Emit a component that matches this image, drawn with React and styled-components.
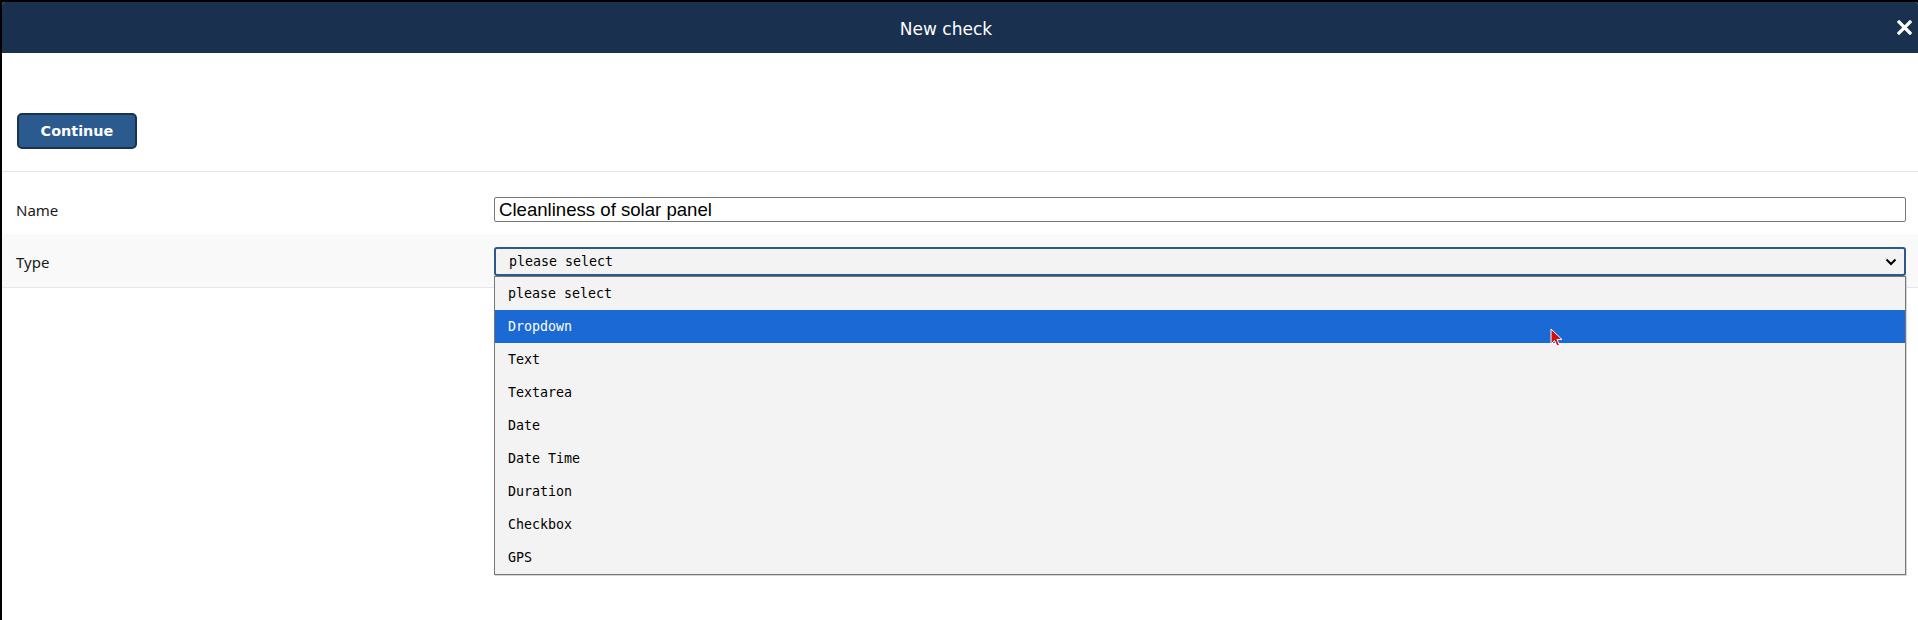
import React, { useState } from "react";
import styled, { createGlobalStyle } from "styled-components";

const GlobalStyle = createGlobalStyle`
  html, body {
    margin: 0;
    padding: 0;
    background: #000;
    height: 100%;
    overflow: hidden;
  }
  #root {
    height: 100%;
  }
`;

const Dialog = styled.div`
  margin: 2px 0 0 2px;
  height: calc(100% - 2px);
  background: #fff;
  border-radius: 3px 3px 0 0;
  display: flex;
  flex-direction: column;
  position: relative;
`;

const Header = styled.header`
  height: 51px;
  background: #19314e;
  border-radius: 3px 3px 0 0;
  display: flex;
  align-items: center;
  color: #fff;
`;

const Title = styled.h1`
  flex: 1;
  margin: 0;
  padding-top: 3px;
  text-align: center;
  font-family: "DejaVu Sans", Verdana, sans-serif;
  font-weight: normal;
  font-size: 17px;
`;

const CloseButton = styled.button`
  width: 28px;
  height: 51px;
  padding: 0;
  border: none;
  background: transparent;
  display: flex;
  align-items: center;
  justify-content: center;
  cursor: pointer;
`;

const Toolbar = styled.div`
  padding: 60px 15px 22px;
  border-bottom: 1px solid #e6e6e6;
`;

const PrimaryButton = styled.button`
  width: 120px;
  height: 36px;
  background: #2a5a8e;
  border: 2px solid #1a3252;
  border-radius: 5px;
  color: #fff;
  font-family: "DejaVu Sans", Verdana, sans-serif;
  font-weight: bold;
  font-size: 14.4px;
  cursor: pointer;
`;

const Form = styled.div`
  margin-top: 25px;
  display: flex;
  flex-direction: column;
`;

const Row = styled.div`
  display: grid;
  grid-template-columns: 478px 1fr;
  align-items: center;
  padding: ${(p) => (p.$shaded ? "13px 12px 11px 14px" : "0 12px 12px 14px")};
  background: ${(p) => (p.$shaded ? "#f9f9f9" : "#fff")};
  border-bottom: ${(p) => (p.$shaded ? "1px solid #e6e6e6" : "none")};
`;

const Label = styled.label`
  font-family: "Noto Sans", sans-serif;
  font-size: 15px;
  color: #1a1a1a;
`;

const TextInput = styled.input`
  box-sizing: border-box;
  width: 100%;
  height: 25px;
  border: 1px solid #767676;
  border-radius: 2px;
  padding: 0 4px;
  font-family: "Liberation Sans", Arial, sans-serif;
  font-size: 18.6px;
  color: #000;
  background: #fff;
  outline: none;
`;

const SelectWrap = styled.div`
  position: relative;
`;

const SelectBox = styled.div`
  box-sizing: border-box;
  height: 29px;
  border: 2px solid #2b5a8a;
  border-radius: 3px;
  background: #f3f3f3;
  display: flex;
  align-items: center;
  justify-content: space-between;
  padding: 0 7px 0 13px;
  font-family: "DejaVu Sans Mono", Consolas, monospace;
  font-size: 13.3px;
  color: #000;
`;

const OptionList = styled.ul`
  position: absolute;
  top: 100%;
  left: 0;
  right: 0;
  margin: 0;
  padding: 0;
  list-style: none;
  background: #f3f3f3;
  border: 1px solid #777;
  box-shadow: 1px 1px 0 #d6d6d6;
  z-index: 2;
`;

const Option = styled.li`
  height: 33px;
  display: flex;
  align-items: center;
  padding-left: 13px;
  font-family: "DejaVu Sans Mono", Consolas, monospace;
  font-size: 13.3px;
  color: ${(p) => (p.$active ? "#fff" : "#000")};
  background: ${(p) => (p.$active ? "#1b69d4" : "transparent")};
`;

const Pointer = styled.svg`
  position: absolute;
  left: 1548px;
  top: 326px;
  pointer-events: none;
  z-index: 3;
`;

const types = [
  "please select",
  "Dropdown",
  "Text",
  "Textarea",
  "Date",
  "Date Time",
  "Duration",
  "Checkbox",
  "GPS",
];

export default function App() {
  const [name, setName] = useState("Cleanliness of solar panel");
  const [hovered] = useState("Dropdown");

  return (
    <>
      <GlobalStyle />
      <Dialog>
        <Header>
          <Title>New check</Title>
          <CloseButton aria-label="Close">
            <svg width="15" height="15" viewBox="0 0 15 15">
              <path
                d="M2 2 L13 13 M13 2 L2 13"
                stroke="#fff"
                strokeWidth="3.2"
                strokeLinecap="square"
              />
            </svg>
          </CloseButton>
        </Header>
        <Toolbar>
          <PrimaryButton>Continue</PrimaryButton>
        </Toolbar>
        <Form>
          <Row>
            <Label>Name</Label>
            <TextInput value={name} onChange={(e) => setName(e.target.value)} />
          </Row>
          <Row $shaded>
            <Label>Type</Label>
            <SelectWrap>
              <SelectBox>
                <span>please select</span>
                <svg width="12" height="8" viewBox="0 0 12 8">
                  <path
                    d="M1.5 1.5 L6 6 L10.5 1.5"
                    fill="none"
                    stroke="#000"
                    strokeWidth="2"
                  />
                </svg>
              </SelectBox>
              <OptionList role="listbox">
                {types.map((t) => (
                  <Option key={t} $active={t === hovered}>
                    {t}
                  </Option>
                ))}
              </OptionList>
            </SelectWrap>
          </Row>
        </Form>
        <Pointer width="14" height="19" viewBox="0 0 14 19">
          <path
            d="M1 1 L1 16 L4.5 12.5 L7 18 L9.5 17 L7 11.5 L12 11.5 Z"
            fill="#d01010"
            stroke="#fff"
            strokeWidth="1"
          />
        </Pointer>
      </Dialog>
    </>
  );
}
